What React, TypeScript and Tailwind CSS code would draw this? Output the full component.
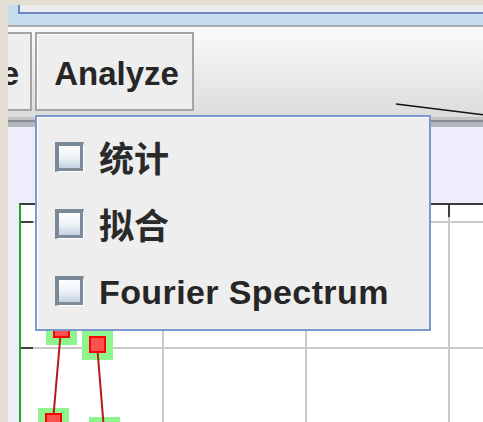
import React from "react";

const latin = { fontFamily: '"Liberation Sans", Arial, sans-serif' };
const cjk = { fontFamily: '"Noto Sans CJK SC", "Noto Sans CJK JP", sans-serif' };

const items = [
  { label: "统计", cjk: true },
  { label: "拟合", cjk: true },
  { label: "Fourier Spectrum", cjk: false },
];

// old-style sunken checkbox
const CheckBox = () => (
  <div className="w-[29px] h-[30px] shrink-0 border-t-[4px] border-l-[4px] border-r-[1px] border-b-[1px] border-t-[#7b8997] border-l-[#7b8997] border-r-white border-b-white">
    <div className="w-full h-full border-r-[3px] border-b-[3px] border-[#7e8c9a] bg-gradient-to-b from-[#fdfeff] via-[#eef3f8] to-[#c4d2e2]" />
  </div>
);

const Plot = () => {
  const pts = [
    { x: 61, y: 329 },
    { x: 97, y: 344 },
    { x: 53, y: 421 },
    { x: 104, y: 430 },
  ];
  return (
    <svg className="absolute inset-0 w-full h-full" preserveAspectRatio="none">
      <g transform="translate(-21 -205)">
        {/* grid */}
        {[163, 306, 449].map((x) => (
          <line key={x} x1={x} y1={205} x2={x} y2={430} stroke="#c9c9c9" strokeWidth={2} />
        ))}
        {[222, 348].map((y) => (
          <line key={y} x1={21} y1={y} x2={490} y2={y} stroke="#c9c9c9" strokeWidth={2} />
        ))}
        {/* ticks */}
        {[163, 306, 449].map((x) => (
          <line key={"t" + x} x1={x} y1={205} x2={x} y2={217} stroke="#404040" strokeWidth={2} />
        ))}
        {[222, 348].map((y) => (
          <line key={"l" + y} x1={21} y1={y} x2={33} y2={y} stroke="#404040" strokeWidth={2} />
        ))}
        {/* series */}
        {pts.map((p, i) => (
          <rect key={"g" + i} x={p.x - 15} y={p.y - 13} width={31} height={29} fill="#8ef58e" />
        ))}
        <line x1={61} y1={329} x2={53} y2={421} stroke="#b21a1a" strokeWidth={2} />
        <line x1={97} y1={344} x2={104} y2={430} stroke="#b21a1a" strokeWidth={2} />
        {pts.map((p, i) => (
          <rect
            key={"r" + i}
            x={p.x - 7}
            y={p.y - 7}
            width={15}
            height={15}
            fill="#ff5050"
            stroke="#ff0000"
            strokeWidth={2}
          />
        ))}
      </g>
    </svg>
  );
};

export default function App() {
  return (
    <div className="relative w-[483px] h-[422px] overflow-hidden bg-[#e5ded3] flex">
      <div className="w-[8px] shrink-0" />
      <div className="flex-1 flex flex-col pt-[5px] min-w-0">
        {/* title strip */}
        <div className="h-[22px] shrink-0 bg-[#c8dcf0] border-b-[2px] border-[#acacac] pl-[10px]">
          <div className="h-[9px] bg-[#ececec] border-l-2 border-b-2 border-[#6e87c3]" />
        </div>

        {/* toolbar */}
        <div className="h-[90px] shrink-0 bg-gradient-to-b from-[#fbfbfb] to-[#dcdcdc] flex items-start gap-[3px] pt-[5px]">
          <div className="w-[24px] h-[79px] overflow-hidden flex items-center justify-end pr-[11px] pt-[5px] bg-[#eeeeee] border-2 border-l-0 border-[#a4a4a4] text-[33px] font-bold text-[#262626]" style={latin}>
            e
          </div>
          <div className="w-[159px] h-[79px] flex items-center justify-center pl-[4px] pt-[5px] bg-[#eeeeee] border-2 border-[#a4a4a4] shadow-[inset_1px_1px_0_#ffffff] text-[33px] font-bold text-[#262626]" style={latin}>
            Analyze
          </div>
        </div>
        <div className="h-[3px] shrink-0 bg-[#c4c4c4]" />
        <div className="h-[2px] shrink-0 bg-[#868c93]" />
        <div className="h-[5px] shrink-0 bg-[#b3b7bc]" />

        {/* chart panel */}
        <div className="flex-1 bg-[#ededfb] pt-[76px] pl-[11px] flex flex-col">
          <div className="relative flex-1 bg-white border-l-2 border-t-2 border-l-[#1ea81e] border-t-[#3a3a3a]">
            <Plot />
          </div>
        </div>
      </div>

      {/* stray line over the toolbar */}
      <svg className="absolute left-0 top-0 w-[483px] h-[130px] pointer-events-none">
        <line x1={396} y1={104} x2={485} y2={115} stroke="#111" strokeWidth={1.5} />
      </svg>

      {/* Analyze dropdown */}
      <div className="absolute left-[35px] top-[115px] w-[396px] h-[216px] border-2 border-[#7d97cf] bg-[#eeeeee] shadow-[inset_1px_1px_0_#ffffff] pt-[6px]">
        {items.map((it) => (
          <div key={it.label} className="h-[67px] flex items-center pl-[18px] gap-[15px]">
            <CheckBox />
            {it.cjk ? (
              <span className="text-[35px] font-bold text-[#2a2a2a] leading-none" style={cjk}>
                {it.label}
              </span>
            ) : (
              <span className="text-[34px] font-bold text-[#262626] leading-none tracking-[0.4px] pt-[3px]" style={latin}>
                {it.label}
              </span>
            )}
          </div>
        ))}
      </div>
    </div>
  );
}
